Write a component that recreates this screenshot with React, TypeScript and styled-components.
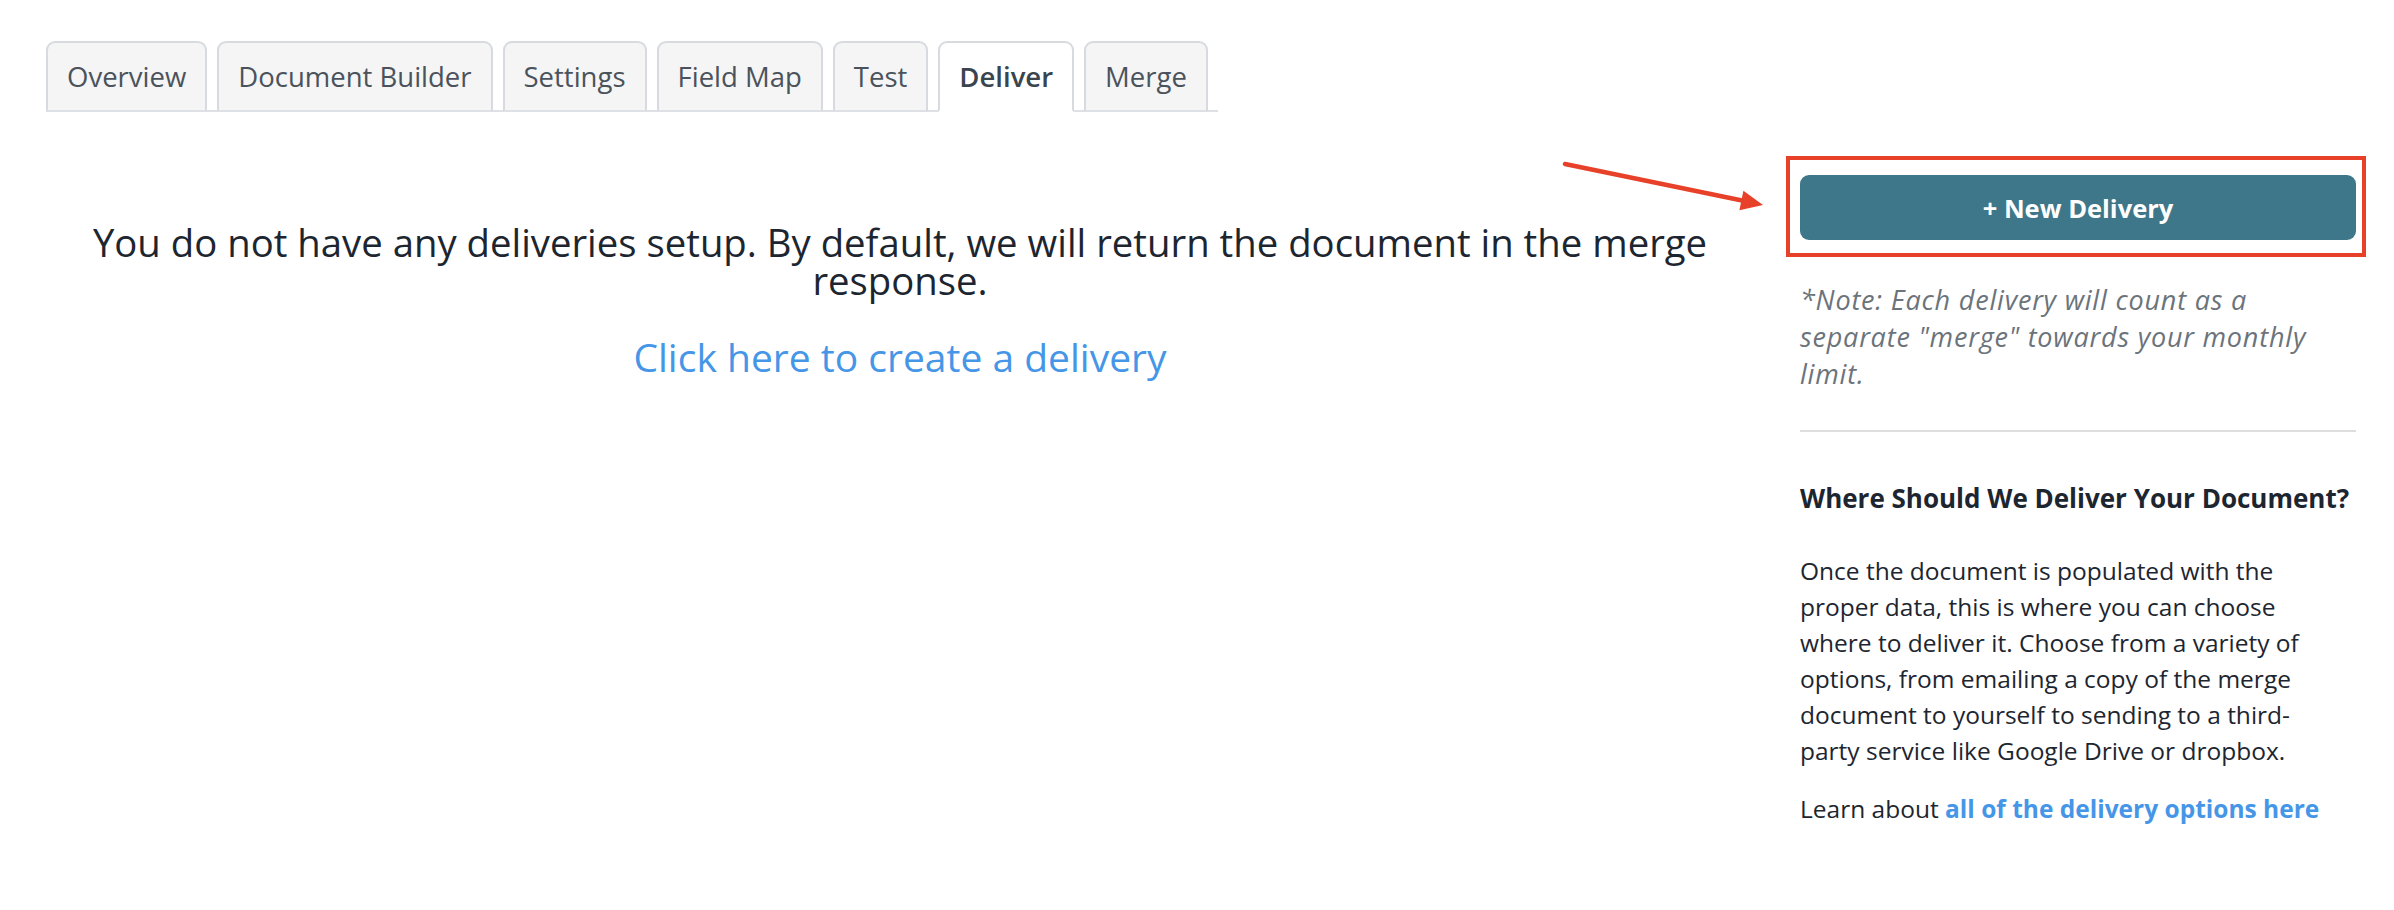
import React from "react"
import styled, { createGlobalStyle } from "styled-components"

const GlobalStyle = createGlobalStyle`
  html, body {
    margin: 0;
    padding: 0;
    background: #fff;
  }
  body {
    font-family: "Open Sans", "Noto Sans", sans-serif;
    color: #1d2630;
  }
`

const Page = styled.div`
  padding: 41px 38px 0 46px;
`

const TabBar = styled.ul`
  display: inline-flex;
  margin: 0;
  padding: 0;
  list-style: none;
  border-bottom: 2px solid #dde1e5;
`

const Tab = styled.li<{ $active?: boolean }>`
  display: flex;
  align-items: center;
  height: 67px;
  margin: 0 10px -2px 0;
  padding: 0 19px;
  border: 2px solid #d7dbdf;
  border-bottom-color: ${(p) => (p.$active ? "#fff" : "#dde1e5")};
  border-radius: 9px 9px 0 0;
  background: ${(p) => (p.$active ? "#fff" : "#f5f5f5")};
  color: ${(p) => (p.$active ? "#3a444e" : "#4a535c")};
  font-size: 27.5px;
  font-weight: ${(p) => (p.$active ? 600 : 400)};
  cursor: pointer;
`

const Content = styled.div`
  display: grid;
  grid-template-columns: 1fr 556px;
  column-gap: 46px;
  margin-top: 63px;
`

const Empty = styled.div`
  text-align: center;
  padding-top: 48px;
`

const EmptyText = styled.p`
  margin: 0;
  font-size: 38.3px;
  line-height: 38px;
  color: #1d2630;
`

const CreateLink = styled.a`
  display: inline-block;
  margin-top: 36px;
  font-size: 39px;
  line-height: 44px;
  color: #4696e8;
  text-decoration: none;
`

const Sidebar = styled.aside`
  position: relative;
  display: flex;
  flex-direction: column;
`

const NewButton = styled.button`
  height: 65px;
  border: none;
  border-radius: 9px;
  background: #3e7789;
  color: #fff;
  font-family: inherit;
  font-size: 25.5px;
  font-weight: 700;
  cursor: pointer;
`

const Highlight = styled.div`
  position: absolute;
  left: -14px;
  top: -19px;
  width: 580px;
  height: 101px;
  box-sizing: border-box;
  border: 4px solid #e8412a;
  pointer-events: none;
`

const Arrow = styled.svg`
  position: absolute;
  left: -240px;
  top: -19px;
`

const Note = styled.p`
  max-width: 530px;
  margin: 41px 0 0;
  font-size: 27px;
  letter-spacing: 0.8px;
  line-height: 37px;
  font-style: italic;
  color: #6b737b;
`

const Divider = styled.hr`
  margin: 38px 0 0;
  border: none;
  border-top: 2px solid #dedede;
`

const Heading = styled.h4`
  margin: 48px 0 0;
  font-size: 26px;
  line-height: 36px;
  font-weight: 700;
  color: #1d2630;
`

const Para = styled.p`
  margin: 37px 0 0;
  font-size: 24.5px;
  line-height: 36px;
  color: #1d2630;
`

const Learn = styled(Para)`
  margin-top: 22px;
`

const InfoLink = styled.a`
  color: #4696e8;
  font-weight: 700;
  text-decoration: none;
`

const tabs = ["Overview", "Document Builder", "Settings", "Field Map", "Test", "Deliver", "Merge"]

export default function App() {
  return (
    <>
      <GlobalStyle />
      <Page>
        <TabBar>
          {tabs.map((t) => (
            <Tab key={t} $active={t === "Deliver"}>{t}</Tab>
          ))}
        </TabBar>
        <Content>
          <Empty>
            <EmptyText>
              You do not have any deliveries setup. By default, we will return the document in the merge response.
            </EmptyText>
            <CreateLink href="#">Click here to create a delivery</CreateLink>
          </Empty>
          <Sidebar>
            <Arrow width="210" height="60" viewBox="0 0 210 60">
              <line x1="5" y1="8" x2="182" y2="44.5" stroke="#e8412a" strokeWidth="4.5" strokeLinecap="round" />
              <polygon points="203,49 179.4,54.3 183.4,34.7" fill="#e8412a" />
            </Arrow>
            <Highlight />
            <NewButton>+ New Delivery</NewButton>
            <Note>*Note: Each delivery will count as a separate "merge" towards your monthly limit.</Note>
            <Divider />
            <Heading>Where Should We Deliver Your Document?</Heading>
            <Para>
              Once the document is populated with the
              <br />
              proper data, this is where you can choose
              <br />
              where to deliver it. Choose from a variety of
              <br />
              options, from emailing a copy of the merge
              <br />
              document to yourself to sending to a third-
              <br />
              party service like Google Drive or dropbox.
            </Para>
            <Learn>
              Learn about <InfoLink href="#">all of the delivery options here</InfoLink>
            </Learn>
          </Sidebar>
        </Content>
      </Page>
    </>
  )
}
